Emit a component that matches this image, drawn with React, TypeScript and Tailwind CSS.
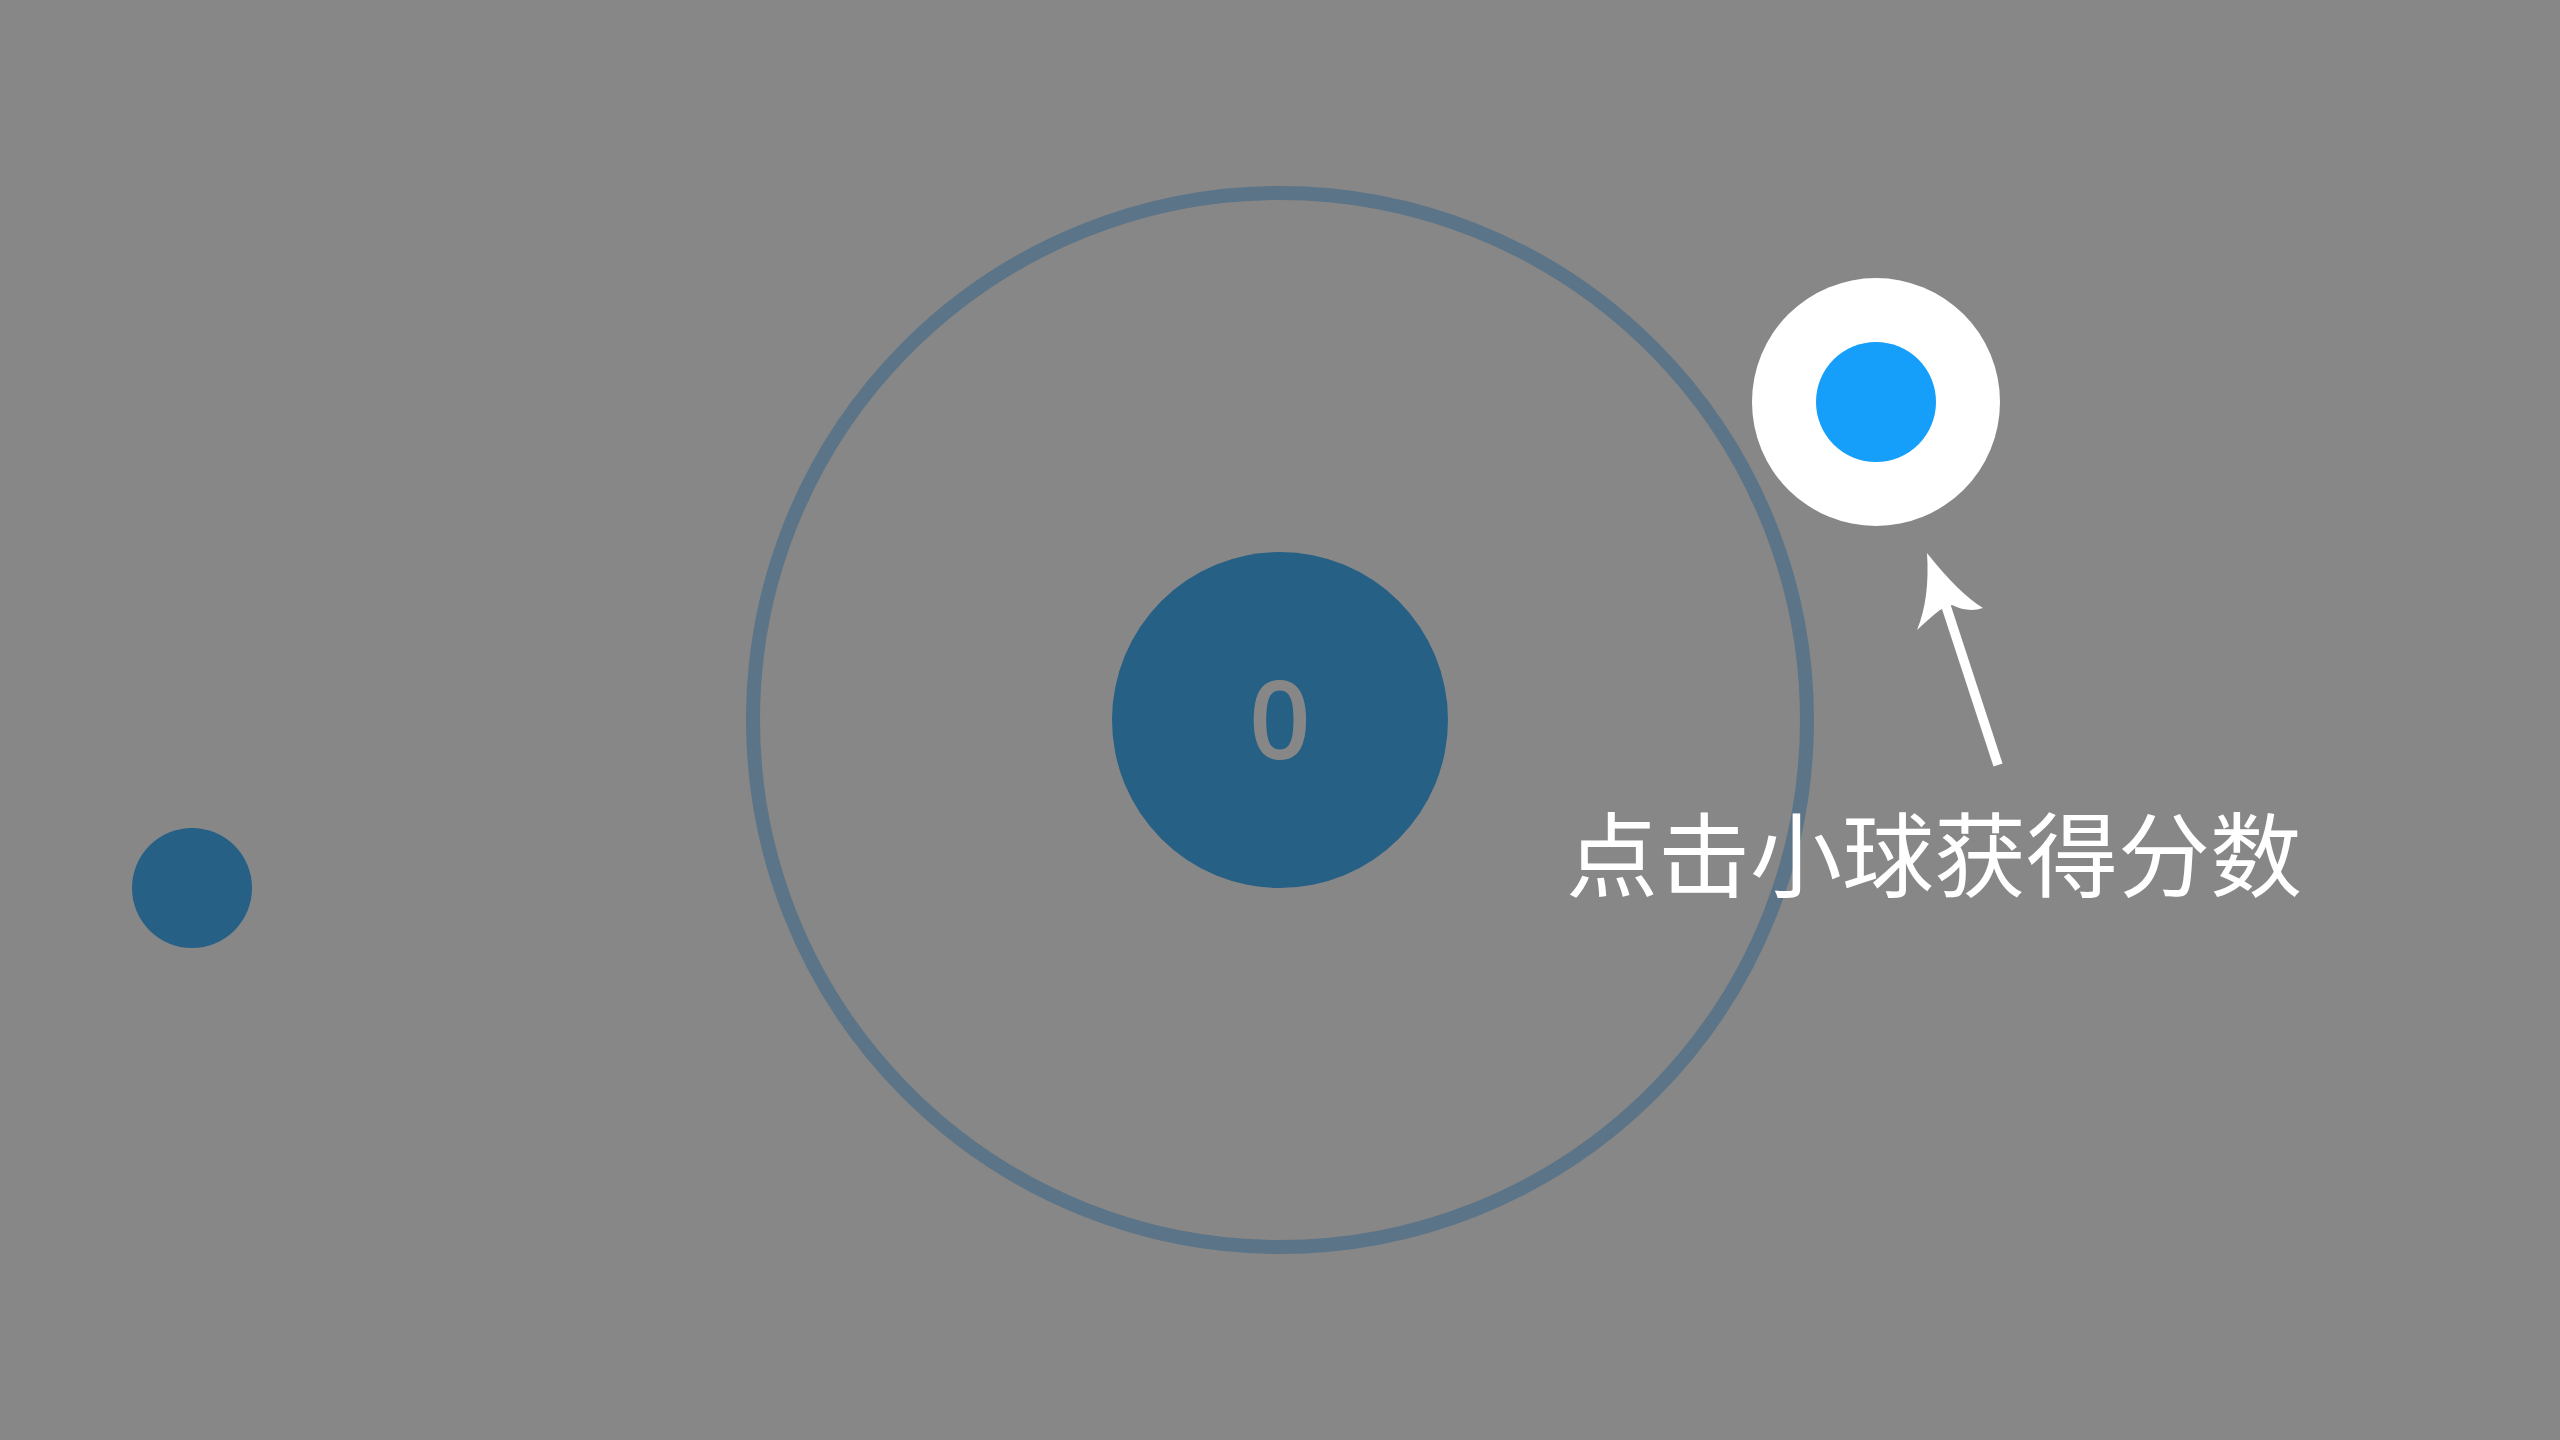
export default function App() {
  return (
    <main className="relative h-screen w-full overflow-hidden bg-[#878787]">
      {/* outer ring */}
      <div className="absolute left-[746px] top-[186px] h-[1068px] w-[1068px] rounded-full border-[14px] border-[#5b7488]" />

      {/* score ball */}
      <div className="absolute left-[1112px] top-[552px] flex h-[336px] w-[336px] items-center justify-center rounded-full bg-[#276085]">
        <span className="-mt-[4px] font-['Open_Sans',sans-serif] text-[108px] font-semibold leading-none text-[#878787]">0</span>
      </div>

      {/* small ball */}
      <div className="absolute left-[132px] top-[828px] h-[120px] w-[120px] rounded-full bg-[#276085]" />

      {/* highlighted target */}
      <div className="absolute left-[1752px] top-[278px] flex h-[248px] w-[248px] items-center justify-center rounded-full bg-white">
        <div className="h-[120px] w-[120px] rounded-full bg-[#159ffa]" />
      </div>

      {/* arrow */}
      <svg className="absolute left-[1900px] top-[540px]" width="110" height="240" viewBox="0 0 110 240" aria-hidden>
        <path
          d="M27 13 Q59 53.5 83 68 Q68 73 52 65 L40 70 Q32 76 17 90 Q30 58.5 27 13 Z"
          fill="#fff"
        />
        <line x1="46" y1="66" x2="98" y2="225" stroke="#fff" strokeWidth="9.5" />
      </svg>

      <p className="absolute left-[1566px] top-[804px] whitespace-nowrap font-['Noto_Sans_CJK_SC',sans-serif] text-[92px] leading-none text-white">
        点击小球获得分数
      </p>
    </main>
  );
}
